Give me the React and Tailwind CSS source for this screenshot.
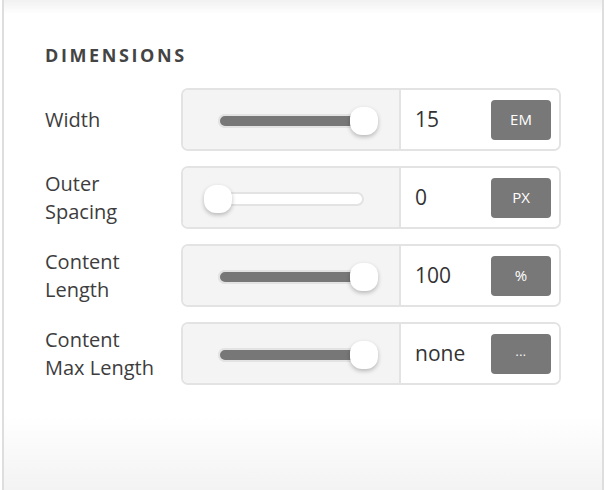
import React from "react";

function Slider({ pct }) {
  const left = 35 + (146 * pct) / 100;
  return (
    <div className="relative w-[218px] h-full bg-[#f4f4f4] border-r-2 border-[#e3e3e3] shrink-0">
      <div className="absolute left-[35px] top-[24px] w-[146px] h-[14px] rounded-full bg-white border-2 border-[#e3e3e3]"></div>
      <div
        className="absolute left-[35px] top-[24px] h-[14px] rounded-full bg-[#777] border-2 border-[#e3e3e3]"
        style={{ width: (146 * pct) / 100 }}
      ></div>
      <div
        className="absolute top-[17px] w-[28px] h-[28px] rounded-[12px] bg-white shadow-[0_2px_4px_rgba(0,0,0,0.25)]"
        style={{ left: left - 14 }}
      ></div>
    </div>
  );
}

function Row({ label, pct, value, unit }) {
  return (
    <div className="flex items-center">
      <div className="w-[136px] text-[20px] leading-[28px] text-[#3d3d3d]">{label}</div>
      <div className="flex w-[380px] h-[63px] rounded-[7px] border-2 border-[#e3e3e3] overflow-hidden">
        <Slider pct={pct} />
        <div className="flex flex-1 items-center justify-between pl-[14px] pr-[8px] bg-white">
          <span className="text-[21px] text-[#333]">{value}</span>
          <div className="w-[60px] h-[40px] rounded-[4px] bg-[#787878] text-white text-[15px] flex items-center justify-center">
            {unit}
          </div>
        </div>
      </div>
    </div>
  );
}

export default function App() {
  return (
    <div
      className="w-[604px] h-[490px] bg-white"
      style={{ fontFamily: '"Open Sans", sans-serif' }}
    >
      <div className="ml-[2px] h-full border-l-2 border-r-2 border-[#dedede] bg-[linear-gradient(to_bottom,#f1f1f1_0px,#ffffff_14px,#ffffff_415px,#f3f3f3_490px)] pl-[41px] pt-[41px]">
        <div className="text-[18px] font-bold tracking-[2.6px] text-[#444] leading-[28px]">DIMENSIONS</div>
        <div className="mt-[19px] flex flex-col gap-[15px]">
          <Row label="Width" pct={100} value="15" unit="EM" />
          <Row label={<>Outer<br />Spacing</>} pct={0} value="0" unit="PX" />
          <Row label={<>Content<br />Length</>} pct={100} value="100" unit="%" />
          <Row label={<>Content<br />Max Length</>} pct={100} value="none" unit={<span className="text-[12px] tracking-[0.5px] pb-[4px]">...</span>} />
        </div>
      </div>
    </div>
  );
}
